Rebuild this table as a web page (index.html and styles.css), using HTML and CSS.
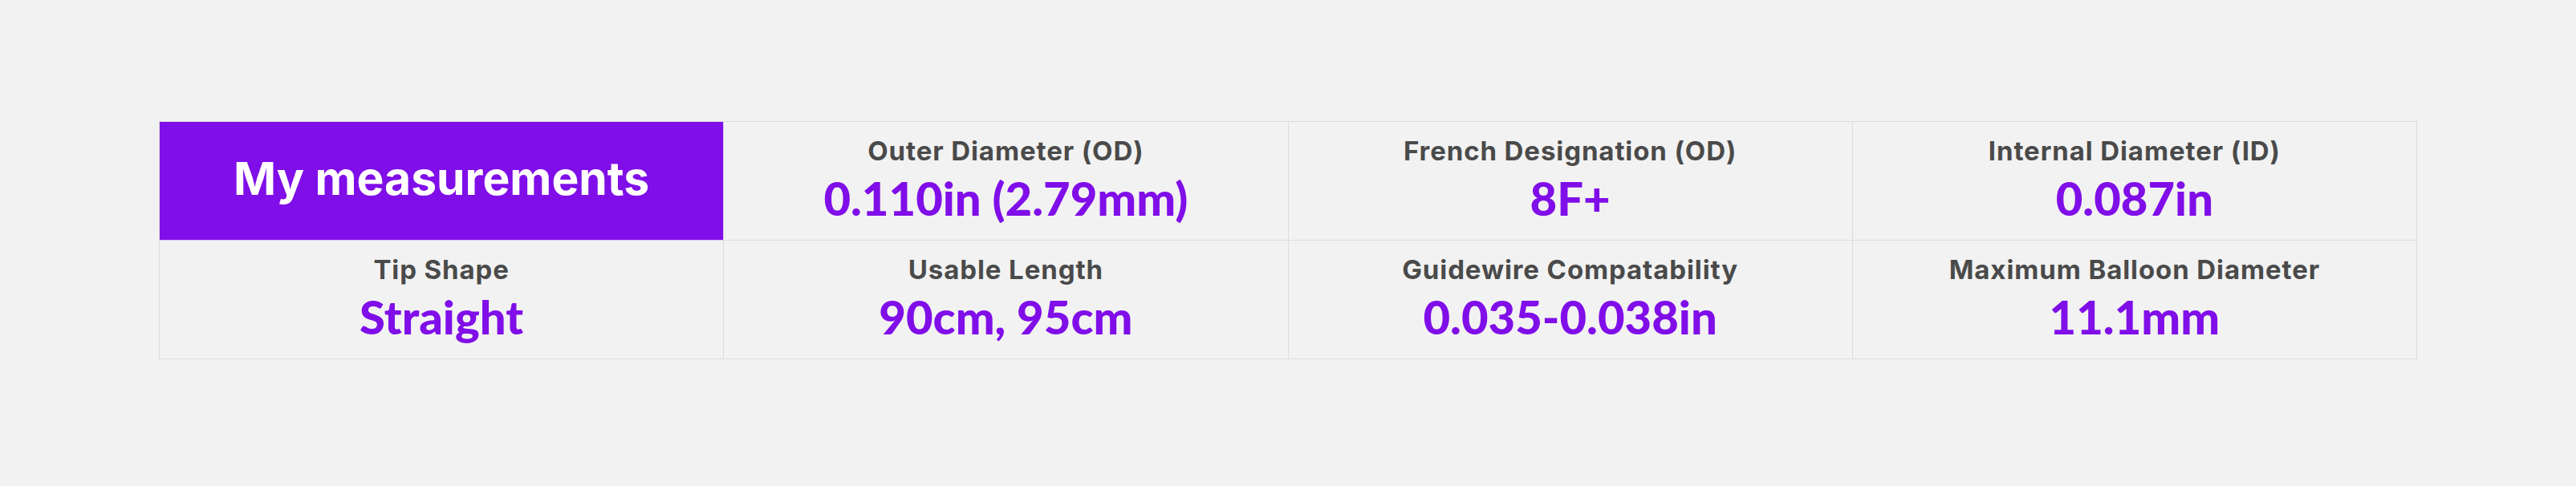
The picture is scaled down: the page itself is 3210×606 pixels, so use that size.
FILE: index.html
```html
<!DOCTYPE html>
<html lang="en">
<head>
<meta charset="utf-8">
<title>My measurements</title>
<link rel="stylesheet" href="styles.css">
</head>
<body>
<main class="page">
  <section class="specs">
    <div class="cell cell-title"><h2 class="title">My measurements</h2></div>
    <div class="cell"><div class="label">Outer Diameter (OD)</div><div class="value">0.110in (2.79mm)</div></div>
    <div class="cell"><div class="label">French Designation (OD)</div><div class="value">8F+</div></div>
    <div class="cell"><div class="label">Internal Diameter (ID)</div><div class="value">0.087in</div></div>
    <div class="cell"><div class="label">Tip Shape</div><div class="value">Straight</div></div>
    <div class="cell"><div class="label">Usable Length</div><div class="value">90cm, 95cm</div></div>
    <div class="cell"><div class="label">Guidewire Compatability</div><div class="value">0.035-0.038in</div></div>
    <div class="cell"><div class="label">Maximum Balloon Diameter</div><div class="value">11.1mm</div></div>
  </section>
</main>
</body>
</html>
```

FILE: styles.css
```css
html, body {
  margin: 0;
  padding: 0;
  background: #f2f2f2;
}
body {
  font-family: "Inter", "Lato", sans-serif;
}
.page {
  padding-top: 151px;
  display: flex;
  justify-content: center;
}
.specs {
  box-sizing: border-box;
  width: 2814px;
  display: grid;
  grid-template-columns: repeat(4, 1fr);
  grid-auto-rows: 148px;
  border-top: 1px solid #dcdcdc;
  border-left: 1px solid #dcdcdc;
}
.cell {
  box-sizing: border-box;
  border-right: 1px solid #dcdcdc;
  border-bottom: 1px solid #dcdcdc;
  padding-bottom: 4px;
  display: flex;
  flex-direction: column;
  align-items: center;
  justify-content: center;
  text-align: center;
}
.cell-title {
  background: #800ee8;
  border-color: #d9c6f3;
}
.title {
  margin: 0;
  color: #ffffff;
  font-family: "Inter", "Lato", sans-serif;
  font-weight: 700;
  font-size: 57px;
  line-height: 1.1;
  letter-spacing: 0;
}
.label {
  color: #4a4a4a;
  font-family: "Inter", "Lato", sans-serif;
  font-weight: 700;
  font-size: 33px;
  line-height: 36px;
  letter-spacing: 0.9px;
  margin-bottom: 10px;
}
.value {
  color: #800ee8;
  font-family: "Lato", "Inter", sans-serif;
  font-weight: 900;
  font-size: 58px;
  line-height: 62px;
}
```
